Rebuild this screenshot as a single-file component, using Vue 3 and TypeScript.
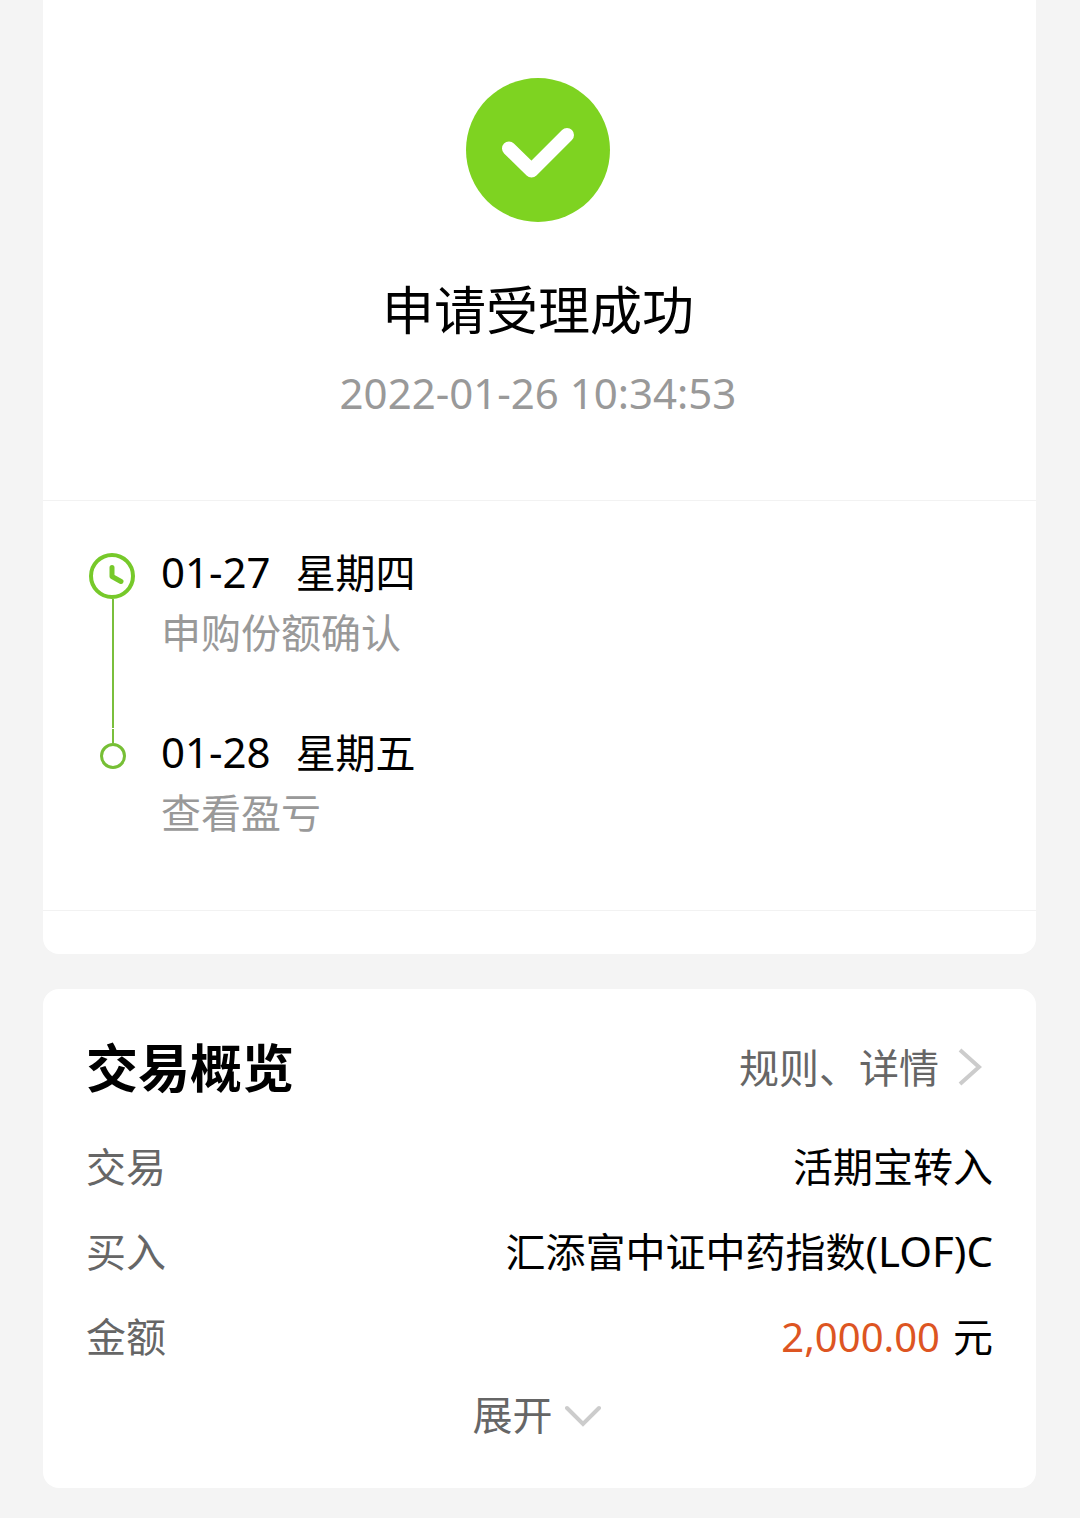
<script setup lang="ts">
import { ref } from 'vue'

interface Step {
  date: string
  weekday: string
  label: string
}

const steps: Step[] = [
  { date: '01-27', weekday: '星期四', label: '申购份额确认' },
  { date: '01-28', weekday: '星期五', label: '查看盈亏' },
]

const expanded = ref(false)
</script>

<template>
  <main class="page">
    <section class="card result">
      <header class="status">
        <svg class="status-icon" viewBox="0 0 144 144" aria-hidden="true">
          <circle cx="72" cy="72" r="72" fill="#7ed321" />
          <path d="M43 70.500L65.500 92.500L101 57" fill="none" stroke="#fff" stroke-width="14" stroke-linecap="round" stroke-linejoin="round" />
        </svg>
        <h1 class="status-title">申请受理成功</h1>
        <time class="status-time" datetime="2022-01-26T10:34:53">2022-01-26 10:34:53</time>
      </header>

      <ol class="steps">
        <li v-for="(step, index) in steps" :key="step.date" class="step">
          <div class="marker">
            <template v-if="index === 0">
              <svg class="clock" viewBox="0 0 46 46" aria-hidden="true">
                <circle cx="23" cy="23" r="21" fill="none" stroke="#76c92a" stroke-width="4" />
                <path d="M23 14.500V23.500L32 28.500" fill="none" stroke="#76c92a" stroke-width="5" stroke-linecap="round" stroke-linejoin="round" />
              </svg>
              <span class="rail"></span>
            </template>
            <template v-else>
              <span class="lead"></span>
              <span class="ring"></span>
            </template>
          </div>
          <div class="step-text">
            <p class="step-day"><span class="latin">{{ step.date }}</span><span>{{ step.weekday }}</span></p>
            <p class="step-label">{{ step.label }}</p>
          </div>
        </li>
      </ol>
    </section>

    <section class="card overview">
      <header class="overview-head">
        <h2 class="overview-title">交易概览</h2>
        <a class="rules" href="#rules">
          规则、详情
          <svg class="arrow-right" viewBox="0 0 24 40" aria-hidden="true">
            <path d="M2 2L21 19L2 36" fill="none" stroke="#ccc" stroke-width="4" />
          </svg>
        </a>
      </header>

      <dl class="rows">
        <div class="row">
          <dt>交易</dt>
          <dd>活期宝转入</dd>
        </div>
        <div class="row">
          <dt>买入</dt>
          <dd>汇添富中证中药指数<span class="latin">(LOF)C</span></dd>
        </div>
        <div class="row">
          <dt>金额</dt>
          <dd class="amount"><span class="sum">2,000.00</span><span>元</span></dd>
        </div>
      </dl>

      <button class="expand" type="button" :aria-expanded="expanded" @click="expanded = !expanded">
        展开
        <svg class="arrow-down" viewBox="0 0 42 24" aria-hidden="true">
          <path d="M2 5L18 21L34 5" fill="none" stroke="#ccc" stroke-width="4" stroke-linecap="round" />
        </svg>
      </button>
    </section>
  </main>
</template>

<style>
body {
  background: #f4f4f4;
}
</style>

<style scoped>
.page {
  box-sizing: border-box;
  display: flex;
  flex-direction: column;
  gap: 35px;
  padding: 0 44px 30px 43px;
  color: #000;
  font-family: "Noto Sans", "Noto Sans CJK SC", sans-serif;
  font-size: 40px;
  line-height: 48px;
}

h1,
h2,
p,
ol,
dl,
dd {
  margin: 0;
  padding: 0;
}

svg {
  display: block;
  flex: none;
}

.card {
  background: #fff;
  border-radius: 16px;
}

.result {
  border-radius: 0 0 16px 16px;
  padding-bottom: 43px;
}

.status {
  display: flex;
  flex-direction: column;
  align-items: center;
  padding: 78px 3px 77px 0;
  border-bottom: 1px solid #f2f2f2;
}

.status-icon {
  width: 144px;
  height: 144px;
}

.status-title {
  margin-top: 58px;
  font-size: 52px;
  font-weight: 400;
  line-height: 60px;
}

.status-time {
  margin-top: 23px;
  color: #999;
  font-size: 42px;
  line-height: 60px;
}

.latin {
  font-size: 42px;
  line-height: 42px;
}

.steps {
  display: flex;
  flex-direction: column;
  gap: 1px;
  padding: 48px 46px 73px;
  border-bottom: 1px solid #f2f2f2;
  list-style: none;
}

.step {
  display: flex;
  gap: 24px;
}

.step:not(:last-child) .step-text {
  padding-bottom: 71px;
}

.marker {
  display: flex;
  flex-direction: column;
  align-items: center;
  width: 48px;
}

.clock {
  align-self: flex-start;
  width: 46px;
  height: 46px;
  margin-top: 4px;
}

.rail,
.lead {
  width: 2px;
  background: #7abf3c;
}

.rail {
  flex: 1;
}

.lead {
  height: 14px;
}

.ring {
  box-sizing: border-box;
  width: 26px;
  height: 26px;
  border: 3px solid #76bf35;
  border-radius: 50%;
}

.step-text {
  display: flex;
  flex-direction: column;
  gap: 12px;
}

.step-day {
  display: flex;
  align-items: baseline;
  gap: 25px;
  height: 48px;
}

.step-label {
  color: #999;
}

.overview {
  padding: 49px 43px;
}

.overview-head {
  display: flex;
  align-items: center;
  justify-content: space-between;
}

.overview-title {
  font-size: 52px;
  font-weight: 700;
  line-height: 60px;
}

.rules {
  display: flex;
  align-items: center;
  gap: 19px;
  padding-right: 11px;
  color: #666;
  text-decoration: none;
}

.arrow-right {
  width: 24px;
  height: 40px;
}

.rows {
  display: flex;
  flex-direction: column;
  gap: 37px;
  margin-top: 45px;
}

.row {
  display: flex;
  justify-content: space-between;
  height: 48px;
}

.row dt {
  color: #666;
}

.amount {
  display: flex;
  align-items: baseline;
  gap: 13px;
}

.sum {
  color: #dd5522;
}

.expand {
  display: flex;
  align-items: center;
  gap: 12px;
  margin: 30px auto 0;
  padding: 0;
  border: 0;
  background: none;
  color: #666;
  font: inherit;
  cursor: pointer;
}

.arrow-down {
  width: 42px;
  height: 24px;
}
</style>
